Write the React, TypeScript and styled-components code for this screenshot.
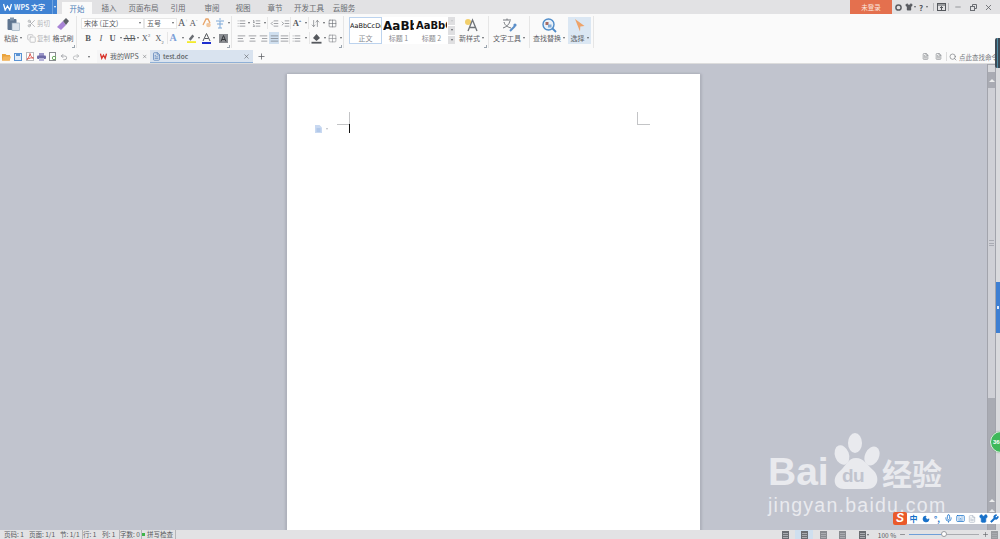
import React from 'react'
import styled, { createGlobalStyle } from 'styled-components'
import {
  AlignCenter,
  AlignJustify,
  AlignLeft,
  AlignRight,
  ArrowDownUp,
  Copy,
  FileText,
  Grid2x2,
  IndentDecrease,
  IndentIncrease,
  Keyboard,
  List,
  ListOrdered,
  Mic,
  Minus,
  Moon,
  Plus,
  Redo2,
  Scissors,
  Search,
  Shirt,
  Undo2,
  Wrench,
  X
} from 'lucide-react'

const GlobalStyle = createGlobalStyle`
  html, body {
    margin: 0;
    padding: 0;
    overflow: hidden;
    background: #c1c4ce;
  }
  * {
    box-sizing: border-box;
  }
`

const Window = styled.div`
  width: 1000px;
  height: 539px;
  position: relative;
  overflow: hidden;
  display: flex;
  flex-direction: column;
  font-family: 'Noto Sans CJK SC', 'Liberation Sans', sans-serif;
  color: #5b5e63;
`

const TitleBar = styled.div`
  height: 14px;
  background: #e2e2e4;
  display: flex;
  align-items: stretch;
  flex: none;
`

const AppButton = styled.div`
  width: 52px;
  background: #3f82d3;
  color: #eef5fc;
  font-size: 7px;
  font-weight: 700;
  display: flex;
  align-items: center;
  gap: 2px;
  padding-left: 3px;
`

const AppDrop = styled.div`
  width: 5px;
  margin-right: 5px;
  background: #3f82d3;
  border-left: 1px solid #6fa3e0;
  display: flex;
  align-items: center;
  justify-content: center;
`

const TitleTab = styled.div<{ $w: number; $on?: boolean }>`
  width: ${p => p.$w}px;
  font-size: 7.5px;
  display: flex;
  align-items: center;
  justify-content: center;
  color: ${p => (p.$on ? '#4f7fb8' : '#696b70')};
  background: ${p => (p.$on ? '#fafafa' : 'transparent')};
  margin-top: ${p => (p.$on ? '2px' : '0')};
`

const LoginButton = styled.div`
  margin-left: auto;
  width: 42px;
  background: #e4704e;
  color: #fbe6df;
  font-size: 6.5px;
  display: flex;
  align-items: center;
  justify-content: center;
`

const WindowTools = styled.div`
  width: 108px;
  display: flex;
  align-items: center;
  color: #55585d;
`

const WindowTool = styled.div<{ $w: number }>`
  width: ${p => p.$w}px;
  display: flex;
  align-items: center;
  justify-content: center;
  font-size: 8px;
  font-weight: 700;
`

const TitleSep = styled.div`
  width: 1px;
  height: 8px;
  background: #b9babd;
`

const Ribbon = styled.div`
  height: 36px;
  background: #fafafa;
  display: flex;
  flex: none;
`

const Group = styled.div<{ $w: number; $pad?: number }>`
  width: ${p => p.$w}px;
  height: 32px;
  margin-top: 2px;
  padding: 1px 0 0 ${p => p.$pad ?? 0}px;
  border-right: 1px solid #e6e6e6;
  position: relative;
  display: flex;
`

const Stack = styled.div`
  display: flex;
  flex-direction: column;
  gap: 3px;
`

const ToolRow = styled.div`
  display: flex;
  align-items: center;
  height: 12px;
`

const Tool = styled.div<{ $w: number; $on?: boolean; $sep?: boolean }>`
  width: ${p => p.$w}px;
  height: 12px;
  flex: none;
  display: flex;
  align-items: center;
  justify-content: center;
  color: #666a70;
  font-size: 8px;
  background: ${p => (p.$on ? '#cfdfef' : 'transparent')};
  border-right: ${p => (p.$sep ? '1px solid #e6e6e6' : '0')};
`

const Glyph = styled.span<{ $bold?: boolean; $italic?: boolean; $strike?: boolean; $c?: string; $size?: number }>`
  font-family: 'Liberation Serif', serif;
  font-size: ${p => p.$size ?? 8.5}px;
  line-height: 1;
  font-weight: ${p => (p.$bold ? 700 : 400)};
  font-style: ${p => (p.$italic ? 'italic' : 'normal')};
  text-decoration: ${p => (p.$strike ? 'line-through' : 'none')};
  color: ${p => p.$c ?? '#55585d'};
  sup, sub {
    font-size: 4.5px;
    line-height: 0;
  }
`

const Caret = styled.i<{ $c?: string }>`
  display: block;
  width: 0;
  height: 0;
  flex: none;
  border-left: 1.5px solid transparent;
  border-right: 1.5px solid transparent;
  border-top: 2px solid ${p => p.$c ?? '#5f6266'};
`

const Expander = styled.i`
  position: absolute;
  right: 1px;
  bottom: 0;
  width: 3px;
  height: 3px;
  border-right: 1px solid #9aa4ae;
  border-bottom: 1px solid #9aa4ae;
`

const Label = styled.span`
  font-size: 7px;
  line-height: 12px;
  color: #5d6065;
  white-space: nowrap;
`

const SmallLabel = styled(Label)`
  color: #b0b2b6;
  font-size: 6.5px;
`

const ClipLarge = styled.div<{ $w: number }>`
  width: ${p => p.$w}px;
  display: flex;
  flex-direction: column;
  align-items: center;
  gap: 1px;
`

const LargeIcon = styled.div`
  height: 14px;
  display: flex;
  align-items: center;
  justify-content: center;
`

const LabelRow = styled.div`
  height: 12px;
  display: flex;
  align-items: center;
  gap: 2px;
`

const Combo = styled.div<{ $w: number }>`
  width: ${p => p.$w}px;
  height: 11px;
  flex: none;
  background: #fff;
  border: 1px solid #e7e7e7;
  display: flex;
  align-items: center;
  justify-content: space-between;
  padding: 0 2px 0 2px;
  font-size: 7px;
  color: #55585d;
`

const Gallery = styled.div`
  width: 107px;
  height: 27px;
  margin-left: 5px;
  background: #fff;
  display: flex;
`

const StyleCard = styled.div<{ $w: number; $on?: boolean }>`
  width: ${p => p.$w}px;
  flex: none;
  overflow: hidden;
  display: flex;
  flex-direction: column;
  align-items: center;
  border: 1px solid ${p => (p.$on ? '#bcd3ee' : 'transparent')};
`

const StyleSample = styled.div<{ $size: number; $bold?: boolean }>`
  height: 16px;
  line-height: 16px;
  align-self: flex-start;
  font-family: 'DejaVu Sans', sans-serif;
  font-size: ${p => p.$size}px;
  font-weight: ${p => (p.$bold ? 700 : 400)};
  color: #111;
  white-space: nowrap;
`

const StyleName = styled.div`
  font-size: 7px;
  line-height: 8px;
  color: #8a8c90;
`

const GalleryScroll = styled.div`
  width: 7px;
  margin-left: auto;
  display: flex;
  flex-direction: column;
  gap: 1px;
`

const GalleryStep = styled.div`
  flex: 1;
  background: #dfdfe1;
  display: flex;
  align-items: center;
  justify-content: center;
`

const BigTool = styled.div<{ $w: number; $on?: boolean }>`
  width: ${p => p.$w}px;
  height: 27px;
  flex: none;
  padding-top: 1px;
  display: flex;
  flex-direction: column;
  align-items: center;
  background: ${p => (p.$on ? '#dbe7f3' : 'transparent')};
`

const TabRow = styled.div`
  height: 14px;
  background: #fafafa;
  border-bottom: 1px solid #dcdcdc;
  display: flex;
  align-items: center;
  flex: none;
`

const QuickTool = styled.div<{ $w: number }>`
  width: ${p => p.$w}px;
  flex: none;
  display: flex;
  align-items: center;
  justify-content: center;
`

const DocTab = styled.div<{ $w: number; $on?: boolean }>`
  width: ${p => p.$w}px;
  height: 13px;
  flex: none;
  display: flex;
  align-items: center;
  gap: ${p => (p.$on ? 2 : 3)}px;
  padding: 0 3px 0 ${p => (p.$on ? 2 : 3)}px;
  font-size: ${p => (p.$on ? 6.5 : 7)}px;
  white-space: nowrap;
  background: ${p => (p.$on ? '#d9e3ef' : '#f5f5f6')};
  border-bottom: 1px solid ${p => (p.$on ? '#8fb0d6' : 'transparent')};
  font-weight: ${p => (p.$on ? 500 : 400)};
  span {
    flex: 1;
  }
`

const CommandSearch = styled.div`
  margin-left: auto;
  display: flex;
  align-items: center;
  width: 80px;
  font-size: 6.5px;
  color: #75787d;
  white-space: nowrap;
  overflow: hidden;
  gap: 2px;
`

const CommandSep = styled.i`
  width: 1px;
  height: 9px;
  flex: none;
  background: #dcdcdc;
`

const Workspace = styled.div`
  flex: 1;
  min-height: 0;
  display: flex;
  background: #c1c4ce;
`

const PageArea = styled.div`
  width: 987px;
  padding-top: 10px;
  display: flex;
  justify-content: center;
  overflow: hidden;
`

const Page = styled.div`
  width: 413px;
  height: 520px;
  background: #fff;
  position: relative;
  box-shadow: -2px 0 2px #aeb1bb, 2px 0 2px #aeb1bb, 0 -1px 2px #b3b6c0;
`

const CropMark = styled.i<{ $left: number; $flip?: boolean }>`
  position: absolute;
  left: ${p => p.$left}px;
  top: 38px;
  width: 13px;
  height: 13px;
  border-bottom: 1px solid #c3c4c6;
  border-right: ${p => (p.$flip ? '0' : '1px solid #c3c4c6')};
  border-left: ${p => (p.$flip ? '1px solid #c3c4c6' : '0')};
`

const Caretline = styled.i`
  position: absolute;
  left: 62px;
  top: 50px;
  width: 1px;
  height: 9px;
  background: #111;
`

const ParaMark = styled.div`
  position: absolute;
  left: 28px;
  top: 51px;
  display: flex;
  align-items: center;
  gap: 4px;
`

const ScrollTrack = styled.div`
  width: 8px;
  background: #a9abb3;
  display: flex;
  flex-direction: column;
  align-items: center;
  border-left: 1px solid #a2a4ac;
`

const ScrollCorner = styled.div`
  width: 100%;
  height: 7px;
  margin-top: 1px;
  background: #d7d8dc;
`

const ScrollArrow = styled.i<{ $down?: boolean }>`
  display: block;
  width: 0;
  height: 0;
  border-left: 3px solid transparent;
  border-right: 3px solid transparent;
  border-bottom: ${p => (p.$down ? '0' : '3px solid #eceded')};
  border-top: ${p => (p.$down ? '3px solid #eceded' : '0')};
`

const ScrollThumb = styled.div`
  width: 100%;
  height: 310px;
  margin: 6px 0 101px;
  background: #cfd0d6;
  display: flex;
  align-items: center;
  justify-content: center;
`

const ThumbGrip = styled.div`
  width: 5px;
  height: 6px;
  border-top: 1px solid #a9abb3;
  border-bottom: 1px solid #a9abb3;
  position: relative;
  &::after {
    content: '';
    position: absolute;
    left: 0;
    right: 0;
    top: 1.5px;
    height: 1px;
    background: #a9abb3;
  }
`

const ScrollStack = styled.div`
  margin-top: 7px;
  display: flex;
  flex-direction: column;
  align-items: center;
  gap: 1px;
`

const SideStrip = styled.div`
  width: 5px;
  background: #d9dadd;
  border-left: 1px solid #a2a4ac;
  padding-top: 218px;
`

const SideTab = styled.div`
  width: 100%;
  height: 51px;
  background: #3e7fd2;
  display: flex;
  align-items: center;
  justify-content: center;
  &::after {
    content: '';
    width: 2px;
    height: 3px;
    background: #dfeafa;
  }
`

const StatusBar = styled.div`
  height: 9px;
  background: #e2e2e4;
  display: flex;
  align-items: center;
  flex: none;
  padding-left: 4px;
  font-size: 6.5px;
  color: #585b60;
  white-space: nowrap;
`

const StatusItem = styled.div<{ $w: number; $sep?: boolean }>`
  width: ${p => p.$w}px;
  flex: none;
  line-height: 9px;
  overflow: hidden;
  border-right: ${p => (p.$sep ? '1px solid #b5b6b9' : '0')};
  display: flex;
  align-items: center;
  gap: 2px;
`

const GreenDot = styled.i`
  width: 3px;
  height: 3px;
  background: #3fb549;
`

const StatusRight = styled.div`
  margin-left: auto;
  display: flex;
  align-items: center;
  height: 9px;
`

const ViewTool = styled.div<{ $on?: boolean; $w: number }>`
  width: ${p => p.$w}px;
  height: 9px;
  display: flex;
  align-items: center;
  justify-content: center;
  gap: 1px;
  background: ${p => (p.$on ? '#cfdfef' : 'transparent')};
`

const ViewIcon = styled.i<{ $c?: string }>`
  width: 7px;
  height: 8px;
  background: repeating-linear-gradient(to bottom, ${p => p.$c ?? '#6a6d72'} 0 1px, #a9abb0 1px 2px);
  border: 1px solid ${p => p.$c ?? '#6a6d72'};
`

const ZoomText = styled.div`
  width: 24px;
  text-align: center;
`

const Slider = styled.div`
  width: 70px;
  height: 1px;
  margin: 0 3px;
  position: relative;
  background: linear-gradient(to right, #6f9fd8 50%, #a9abb0 50%);
`

const SliderKnob = styled.i`
  position: absolute;
  left: 32px;
  top: -3px;
  width: 6px;
  height: 6px;
  border-radius: 50%;
  background: #fff;
  border: 1px solid #9a9ca0;
`

const Watermark = styled.div`
  position: absolute;
  left: 768px;
  top: 432px;
  width: 190px;
  color: #e9eaee;
`

const BrandRow = styled.div`
  display: flex;
  align-items: flex-end;
  height: 58px;
`

const Bai = styled.div`
  font-family: 'Liberation Sans', sans-serif;
  font-weight: 700;
  font-size: 39px;
  line-height: 36px;
  width: 64px;
`

const PawBox = styled.div`
  width: 50px;
  height: 58px;
  position: relative;
  flex: none;
`

const DuText = styled.span`
  position: absolute;
  left: 10px;
  top: 34px;
  font-family: 'Liberation Sans', sans-serif;
  font-size: 19px;
  line-height: 20px;
  font-weight: 700;
  letter-spacing: -0.5px;
  color: #c1c4ce;
`

const Jing = styled.div`
  font-size: 30px;
  line-height: 36px;
  font-weight: 700;
  white-space: nowrap;
`

const SiteName = styled.div`
  font-family: 'Liberation Sans', sans-serif;
  font-size: 19.5px;
  line-height: 24px;
  margin-top: 3px;
  letter-spacing: 1.25px;
  white-space: nowrap;
`

const Bubble = styled.div`
  position: absolute;
  left: 990px;
  top: 431px;
  width: 22px;
  height: 22px;
  border-radius: 50%;
  background: #3fb85a;
  border: 1px solid #dff2e3;
  box-shadow: 0 0 1px #7c8a80;
  color: #fff;
  font-size: 6px;
  font-weight: 700;
  font-family: 'Liberation Sans', sans-serif;
  line-height: 20px;
  padding-left: 2px;
`

const DarkWidget = styled.div`
  position: absolute;
  left: 995px;
  top: 38px;
  width: 5px;
  height: 30px;
  background: #3d4a56;
  border-radius: 2px 0 0 2px;
  display: flex;
  justify-content: center;
  &::after {
    content: '';
    width: 1px;
    background: #4f8fa8;
  }
`

const ImeBar = styled.div`
  position: absolute;
  left: 893px;
  top: 512px;
  width: 107px;
  height: 13px;
  display: flex;
  align-items: center;
`

const ImeLogo = styled.div`
  width: 14px;
  height: 13px;
  background: #ea5a2a;
  border-radius: 2px;
  color: #fff;
  font-family: 'Liberation Sans', sans-serif;
  font-size: 12px;
  font-weight: 700;
  font-style: italic;
  line-height: 13px;
  text-align: center;
  flex: none;
`

const ImeTray = styled.div`
  flex: 1;
  height: 11px;
  background: #fff;
  display: flex;
  align-items: center;
  color: #1770c9;
`

const ImeItem = styled.div<{ $w: number; $c?: string }>`
  width: ${p => p.$w}px;
  flex: none;
  font-size: 8px;
  line-height: 11px;
  font-weight: 700;
  display: flex;
  align-items: center;
  justify-content: center;
  color: ${p => p.$c ?? '#1770c9'};
`

const PasteIcon = () => (
  <svg width="13" height="14" viewBox="0 0 13 14">
    <rect x="0.5" y="2" width="9" height="11" rx="1" fill="#5f7590" />
    <rect x="3" y="0.5" width="4" height="3" fill="#8195ab" />
    <rect x="5" y="6" width="7.5" height="7.5" fill="#dbe3ec" stroke="#8da2b8" strokeWidth="0.6" />
  </svg>
)

const BrushIcon = () => (
  <svg width="14" height="14" viewBox="0 0 14 14">
    <path d="M1 10 L7 4 L10 8 L5 13 Z" fill="#a884d6" />
    <path d="M7 4 L10 1 L13 4 L10 8 Z" fill="#5d6068" />
  </svg>
)

const WpsMark = () => (
  <svg width="9" height="8" viewBox="0 0 9 8">
    <path d="M0.5 1 L2.2 7 L4.5 3 L6.8 7 L8.5 1" fill="none" stroke="#fff" strokeWidth="1.3" />
  </svg>
)

const RedW = () => (
  <svg width="9" height="8" viewBox="0 0 9 8">
    <path d="M0.5 1 L2.3 7 L4.5 3 L6.7 7 L8.5 1" fill="none" stroke="#d8342c" strokeWidth="1.8" />
  </svg>
)

const ClearIcon = () => (
  <svg width="10" height="10" viewBox="0 0 10 10">
    <path d="M1 7 L4 1 L6 1 L8 5" fill="none" stroke="#e8a468" strokeWidth="1.3" />
    <circle cx="6.5" cy="7" r="2.3" fill="#f1c79f" />
  </svg>
)

const PinyinIcon = () => (
  <svg width="10" height="11" viewBox="0 0 10 11">
    <path d="M1 3 H9 M5 3 V10 M2 6 H8 M3 10 H7" stroke="#7da8d8" strokeWidth="1" fill="none" />
    <circle cx="5" cy="1" r="0.8" fill="#7da8d8" />
  </svg>
)

const HighlightIcon = () => (
  <svg width="10" height="11" viewBox="0 0 10 11">
    <path d="M2 6 L6 1 L8 3 L4 8 Z" fill="#6a6d72" />
    <rect x="0" y="8.5" width="10" height="2" fill="#f3ea2c" />
  </svg>
)

const ShadingIcon = () => (
  <svg width="11" height="11" viewBox="0 0 11 11">
    <path d="M5.5 1 L9 5 L5.5 8 L2 5 Z" fill="#55585d" />
    <rect x="0.5" y="8.8" width="10" height="1.8" fill="#55585d" />
  </svg>
)

const SparkleStyle = () => (
  <svg width="15" height="14" viewBox="0 0 15 14">
    <circle cx="4" cy="4" r="3" fill="#f2cf6b" />
    <path d="M4 13 L8.5 2 L13 13 M6 9.5 H11" fill="none" stroke="#6f7378" strokeWidth="1.3" />
  </svg>
)

const TextToolIcon = () => (
  <svg width="15" height="14" viewBox="0 0 15 14">
    <path d="M1 2 H9 M5 0.5 V2 M2 4 C3 8 6 9 9 10 M8 3 C7 7 4 9 1 10" fill="none" stroke="#73777c" strokeWidth="1" />
    <path d="M8 13 L13 8" stroke="#5b8fc9" strokeWidth="2" />
    <circle cx="13" cy="7" r="1.6" fill="#5b8fc9" />
  </svg>
)

const FindIcon = () => (
  <svg width="15" height="15" viewBox="0 0 15 15">
    <circle cx="6.5" cy="6.5" r="5.5" fill="#e8f0f8" stroke="#4f8cc9" strokeWidth="1.4" />
    <path d="M10.5 10.5 L14 14" stroke="#4f8cc9" strokeWidth="1.8" />
    <rect x="3.5" y="4" width="3" height="3" fill="#a76b62" />
    <rect x="6" y="6.5" width="3.5" height="3" fill="#7fa9d6" />
  </svg>
)

const CursorIcon = () => (
  <svg width="11" height="14" viewBox="0 0 11 14">
    <path d="M1 1 L10.5 8 L6.3 8.5 L6 13.5 Z" fill="#eda36a" />
  </svg>
)

const FolderIcon = () => (
  <svg width="9" height="8" viewBox="0 0 9 8">
    <path d="M0 1 H3.5 L4.5 2 H8 V7.5 H0 Z" fill="#e9a23b" />
    <path d="M1.5 3.5 H9 L7.5 7.5 H0 Z" fill="#f3b45a" />
  </svg>
)

const SaveIcon = () => (
  <svg width="8" height="8" viewBox="0 0 8 8">
    <rect x="0.5" y="0.5" width="7" height="7" fill="#e3edf8" stroke="#5a93d4" />
    <rect x="2" y="0.5" width="4" height="2.5" fill="#5a93d4" />
  </svg>
)

const PdfIcon = () => (
  <svg width="8" height="9" viewBox="0 0 8 9">
    <rect x="0.5" y="0.5" width="7" height="8" fill="#fff" stroke="#b9bbbf" />
    <path d="M1 7.5 C3 5 4 3 4 1.5 C4.5 4 6 6 7.5 6 C5.5 5.5 3 6 1 7.5 Z" fill="none" stroke="#d94a3f" strokeWidth="0.9" />
  </svg>
)

const PrintIcon = () => (
  <svg width="9" height="8" viewBox="0 0 9 8">
    <rect x="2" y="0" width="5" height="3" fill="#9b96c9" />
    <rect x="0" y="2.5" width="9" height="3.5" rx="1" fill="#6e6aa6" />
    <rect x="2" y="5" width="5" height="3" fill="#b6b3d8" />
  </svg>
)

const PreviewIcon = () => (
  <svg width="8" height="9" viewBox="0 0 8 9">
    <rect x="0.5" y="0.5" width="6" height="8" fill="#fff" stroke="#8a8d92" />
    <circle cx="5" cy="6" r="1.7" fill="none" stroke="#6cab5f" />
  </svg>
)

const ParaIcon = () => (
  <svg width="7" height="8" viewBox="0 0 7 8">
    <path d="M0 0 H4.5 L7 2.5 V8 H0 Z" fill="#c9d9f1" />
    <path d="M1.5 4 H5.5 M1.5 6 H5.5" stroke="#8fb0e0" strokeWidth="0.8" />
  </svg>
)

const PawIcon = () => (
  <svg width="50" height="58" viewBox="0 0 50 58">
    <ellipse cx="10" cy="23" rx="7" ry="10" transform="rotate(-20 10 23)" fill="#e9eaee" />
    <ellipse cx="23" cy="11" rx="7" ry="10" fill="#e9eaee" />
    <ellipse cx="40" cy="24" rx="7" ry="10" transform="rotate(25 40 24)" fill="#e9eaee" />
    <path d="M24 26 C32 26 35 33 41 38 C48 44 47 57 35 57 H12 C1 57 0 45 8 39 C14 34 16 26 24 26 Z" fill="#e9eaee" />
  </svg>
)

const titleTabs = [
  { label: '开始', w: 30, on: true },
  { label: '插入', w: 34 },
  { label: '页面布局', w: 35 },
  { label: '引用', w: 34 },
  { label: '审阅', w: 34 },
  { label: '视图', w: 28 },
  { label: '章节', w: 36 },
  { label: '开发工具', w: 32 },
  { label: '云服务', w: 38 }
]

const ic = { size: 9, strokeWidth: 1.6 }

const App: React.FC = () => (
  <Window>
    <GlobalStyle />
    <TitleBar>
      <AppButton>
        <WpsMark />
        WPS 文字
      </AppButton>
      <AppDrop>
        <Caret $c="#fff" />
      </AppDrop>
      {titleTabs.map(t => (
        <TitleTab key={t.label} $w={t.w} $on={t.on}>
          {t.label}
        </TitleTab>
      ))}
      <LoginButton>未登录</LoginButton>
      <WindowTools>
        <WindowTool $w={12}>
          <svg width="7" height="7" viewBox="0 0 7 7">
            <circle cx="3.5" cy="3.5" r="2.6" fill="none" stroke="#5a5d62" strokeWidth="1.5" />
          </svg>
        </WindowTool>
        <WindowTool $w={9}>
          <Shirt size={8} fill="#5a5d62" strokeWidth={1} />
        </WindowTool>
        <WindowTool $w={4}>
          <Caret />
        </WindowTool>
        <WindowTool $w={8}>?</WindowTool>
        <WindowTool $w={4}>
          <Caret />
        </WindowTool>
        <WindowTool $w={4} />
        <TitleSep />
        <WindowTool $w={14}>
          <svg width="9" height="8" viewBox="0 0 9 8">
            <rect x="0.5" y="0.5" width="8" height="7" fill="none" stroke="#55585d" />
            <path d="M0.5 2 H8.5" stroke="#55585d" />
            <path d="M4.5 7 V3.5 M3 5 L4.5 3.5 L6 5" stroke="#55585d" fill="none" />
          </svg>
        </WindowTool>
        <TitleSep />
        <WindowTool $w={18}>
          <Minus size={8} strokeWidth={1.6} />
        </WindowTool>
        <WindowTool $w={12}>
          <svg width="7" height="7" viewBox="0 0 7 7">
            <rect x="0.5" y="2.5" width="4" height="4" fill="none" stroke="#6a6d72" />
            <path d="M2.5 2.5 V0.5 H6.5 V4.5 H4.5" fill="none" stroke="#6a6d72" />
          </svg>
        </WindowTool>
        <WindowTool $w={19}>
          <X size={9} strokeWidth={2} />
        </WindowTool>
      </WindowTools>
    </TitleBar>

    <Ribbon>
      <Group $w={77}>
        <ClipLarge $w={26}>
          <LargeIcon>
            <PasteIcon />
          </LargeIcon>
          <LabelRow>
            <Label>粘贴</Label>
            <Caret />
          </LabelRow>
        </ClipLarge>
        <Stack>
          <ToolRow>
            <Tool $w={11}>
              <Scissors size={9} color="#a2a4a8" />
            </Tool>
            <SmallLabel>剪切</SmallLabel>
          </ToolRow>
          <ToolRow>
            <Tool $w={11}>
              <Copy size={9} color="#b5b7ba" />
            </Tool>
            <SmallLabel>复制</SmallLabel>
          </ToolRow>
        </Stack>
        <ClipLarge $w={26}>
          <LargeIcon>
            <BrushIcon />
          </LargeIcon>
          <Label>格式刷</Label>
        </ClipLarge>
        <Expander />
      </Group>

      <Group $w={155} $pad={4}>
        <Stack>
          <ToolRow>
            <Combo $w={63}>
              宋体 (正文)
              <Caret />
            </Combo>
            <Combo $w={33}>
              五号
              <Caret />
            </Combo>
            <Tool $w={1} />
            <Tool $w={10}>
              <Glyph $size={10}>
                A<sup>+</sup>
              </Glyph>
            </Tool>
            <Tool $w={11}>
              <Glyph $size={9}>
                A<sup>-</sup>
              </Glyph>
            </Tool>
            <Tool $w={15}>
              <ClearIcon />
            </Tool>
            <Tool $w={12}>
              <PinyinIcon />
            </Tool>
            <Tool $w={5}>
              <Caret />
            </Tool>
          </ToolRow>
          <ToolRow>
            <Tool $w={14}>
              <Glyph $bold>B</Glyph>
            </Tool>
            <Tool $w={12}>
              <Glyph $italic>I</Glyph>
            </Tool>
            <Tool $w={11}>
              <Glyph $bold>U</Glyph>
            </Tool>
            <Tool $w={6}>
              <Caret />
            </Tool>
            <Tool $w={11}>
              <Glyph $strike>AB</Glyph>
            </Tool>
            <Tool $w={5}>
              <Caret />
            </Tool>
            <Tool $w={12}>
              <Glyph>
                X<sup>2</sup>
              </Glyph>
            </Tool>
            <Tool $w={16} $sep>
              <Glyph>
                X<sub>2</sub>
              </Glyph>
            </Tool>
            <Tool $w={10}>
              <Glyph $bold $c="#7d9fd8" $size={10}>
                A
              </Glyph>
            </Tool>
            <Tool $w={9}>
              <Caret />
            </Tool>
            <Tool $w={9}>
              <HighlightIcon />
            </Tool>
            <Tool $w={5}>
              <Caret />
            </Tool>
            <Tool $w={10}>
              <svg width="9" height="11" viewBox="0 0 9 11">
                <path d="M1 8 L4.5 0.5 L8 8 M2.5 5.5 H6.5" fill="none" stroke="#55585d" />
                <rect y="9" width="9" height="2" fill="#1e2fcf" />
              </svg>
            </Tool>
            <Tool $w={6}>
              <Caret />
            </Tool>
            <Tool $w={12}>
              <svg width="9" height="9" viewBox="0 0 9 9">
                <rect width="9" height="9" fill="#8a8d92" />
                <path d="M2 7.5 L4.5 1.5 L7 7.5 M3 5.5 H6" fill="none" stroke="#33363a" />
              </svg>
            </Tool>
          </ToolRow>
        </Stack>
        <Expander />
      </Group>

      <Group $w={112} $pad={4}>
        <Stack>
          <ToolRow>
            <Tool $w={10}>
              <List {...ic} />
            </Tool>
            <Tool $w={5}>
              <Caret />
            </Tool>
            <Tool $w={11}>
              <ListOrdered {...ic} />
            </Tool>
            <Tool $w={6} $sep>
              <Caret />
            </Tool>
            <Tool $w={12}>
              <IndentDecrease {...ic} />
            </Tool>
            <Tool $w={11} $sep>
              <IndentIncrease {...ic} />
            </Tool>
            <Tool $w={12}>
              <Glyph $bold>
                A<sup>+</sup>
              </Glyph>
            </Tool>
            <Tool $w={6} $sep>
              <Caret />
            </Tool>
            <Tool $w={12}>
              <ArrowDownUp {...ic} />
            </Tool>
            <Tool $w={5}>
              <Caret />
            </Tool>
            <Tool $w={12}>
              <Grid2x2 {...ic} />
            </Tool>
          </ToolRow>
          <ToolRow>
            <Tool $w={11}>
              <AlignLeft {...ic} />
            </Tool>
            <Tool $w={11}>
              <AlignCenter {...ic} />
            </Tool>
            <Tool $w={11}>
              <AlignRight {...ic} />
            </Tool>
            <Tool $w={10} $on>
              <AlignJustify {...ic} />
            </Tool>
            <Tool $w={11} $sep>
              <AlignJustify {...ic} />
            </Tool>
            <Tool $w={12}>
              <List {...ic} />
            </Tool>
            <Tool $w={8} $sep>
              <Caret />
            </Tool>
            <Tool $w={12}>
              <ShadingIcon />
            </Tool>
            <Tool $w={5}>
              <Caret />
            </Tool>
            <Tool $w={11}>
              <Grid2x2 {...ic} color="#85888d" />
            </Tool>
            <Tool $w={5}>
              <Caret />
            </Tool>
          </ToolRow>
        </Stack>
        <Expander />
      </Group>

      <Group $w={145}>
        <Gallery>
          <StyleCard $w={33} $on>
            <StyleSample $size={6.5}>AaBbCcDd</StyleSample>
            <StyleName>正文</StyleName>
          </StyleCard>
          <StyleCard $w={33}>
            <StyleSample $size={12} $bold>
              AaBbC
            </StyleSample>
            <StyleName>标题 1</StyleName>
          </StyleCard>
          <StyleCard $w={33}>
            <StyleSample $size={10} $bold>
              AaBbC
            </StyleSample>
            <StyleName>标题 2</StyleName>
          </StyleCard>
          <GalleryScroll>
            <GalleryStep>
              <Caret $c="#c4c5c8" />
            </GalleryStep>
            <GalleryStep>
              <Caret />
            </GalleryStep>
            <GalleryStep>
              <Caret />
            </GalleryStep>
          </GalleryScroll>
        </Gallery>
        <BigTool $w={33}>
          <LargeIcon>
            <SparkleStyle />
          </LargeIcon>
          <LabelRow>
            <Label>新样式</Label>
            <Caret />
          </LabelRow>
        </BigTool>
        <Expander />
      </Group>

      <Group $w={41}>
        <BigTool $w={40}>
          <LargeIcon>
            <TextToolIcon />
          </LargeIcon>
          <LabelRow>
            <Label>文字工具</Label>
            <Caret />
          </LabelRow>
        </BigTool>
      </Group>

      <Group $w={64}>
        <BigTool $w={38}>
          <LargeIcon>
            <FindIcon />
          </LargeIcon>
          <LabelRow>
            <Label>查找替换</Label>
            <Caret />
          </LabelRow>
        </BigTool>
        <BigTool $w={23} $on>
          <LargeIcon>
            <CursorIcon />
          </LargeIcon>
          <LabelRow>
            <Label>选择</Label>
            <Caret />
          </LabelRow>
        </BigTool>
      </Group>
    </Ribbon>

    <TabRow>
      <QuickTool $w={12}>
        <FolderIcon />
      </QuickTool>
      <QuickTool $w={12}>
        <SaveIcon />
      </QuickTool>
      <QuickTool $w={12}>
        <PdfIcon />
      </QuickTool>
      <QuickTool $w={11}>
        <PrintIcon />
      </QuickTool>
      <QuickTool $w={11}>
        <PreviewIcon />
      </QuickTool>
      <QuickTool $w={12}>
        <Undo2 size={8} color="#8a8d92" />
      </QuickTool>
      <QuickTool $w={11}>
        <Redo2 size={8} color="#a5a7ab" />
      </QuickTool>
      <QuickTool $w={16}>
        <Caret />
      </QuickTool>
      <DocTab $w={53}>
        <RedW />
        <span>我的WPS</span>
        <X size={7} />
      </DocTab>
      <DocTab $w={103} $on>
        <FileText size={9} color="#5a82b8" />
        <span>test.doc</span>
        <X size={7} />
      </DocTab>
      <QuickTool $w={16}>
        <Plus size={9} />
      </QuickTool>
      <CommandSearch>
        <QuickTool $w={10}>
          <FileText size={7} />
        </QuickTool>
        <QuickTool $w={12}>
          <FileText size={7} />
        </QuickTool>
        <CommandSep />
        <Search size={8} />
        点此查找命令
      </CommandSearch>
    </TabRow>

    <Workspace>
      <PageArea>
        <Page>
          <CropMark $left={50} />
          <CropMark $left={350} $flip />
          <ParaMark>
            <ParaIcon />
            <Caret $c="#b9bcc2" />
          </ParaMark>
          <Caretline />
        </Page>
      </PageArea>
      <ScrollTrack>
        <ScrollCorner />
        <ScrollStack>
          <ScrollArrow />
        </ScrollStack>
        <ScrollThumb>
          <ThumbGrip />
        </ScrollThumb>
        <ScrollArrow />
        <ScrollStack>
          <ScrollArrow />
          <ScrollArrow $down />
        </ScrollStack>
      </ScrollTrack>
      <SideStrip>
        <SideTab />
      </SideStrip>
    </Workspace>

    <StatusBar>
      <StatusItem $w={25}>页码: 1</StatusItem>
      <StatusItem $w={31}>页面: 1/1</StatusItem>
      <StatusItem $w={23} $sep>
        节: 1/1
      </StatusItem>
      <StatusItem $w={19}>行: 1</StatusItem>
      <StatusItem $w={18} $sep>
        列: 1
      </StatusItem>
      <StatusItem $w={22} $sep>
        字数: 0
      </StatusItem>
      <StatusItem $w={34} $sep>
        <GreenDot />
        拼写检查
      </StatusItem>
      <StatusRight>
        <ViewTool $w={20}>
          <ViewIcon />
        </ViewTool>
        <ViewTool $w={18} $on>
          <ViewIcon />
        </ViewTool>
        <ViewTool $w={20}>
          <ViewIcon $c="#888b90" />
        </ViewTool>
        <ViewTool $w={19}>
          <ViewIcon $c="#888b90" />
        </ViewTool>
        <ViewTool $w={23}>
          <ViewIcon />
          <Caret />
        </ViewTool>
        <ZoomText>100 %</ZoomText>
        <Minus size={7} />
        <Slider>
          <SliderKnob />
        </Slider>
        <Plus size={7} />
        <ViewTool $w={11}>
          <ViewIcon $c="#9a9ca0" />
        </ViewTool>
      </StatusRight>
    </StatusBar>

    <Watermark>
      <BrandRow>
        <Bai>Bai</Bai>
        <PawBox>
          <PawIcon />
          <DuText>du</DuText>
        </PawBox>
        <Jing>经验</Jing>
      </BrandRow>
      <SiteName>jingyan.baidu.com</SiteName>
    </Watermark>

    <Bubble>360</Bubble>
    <DarkWidget />

    <ImeBar>
      <ImeLogo>S</ImeLogo>
      <ImeTray>
        <ImeItem $w={13}>中</ImeItem>
        <ImeItem $w={12}>
          <Moon size={8} fill="#1770c9" />
        </ImeItem>
        <ImeItem $w={10}>°,</ImeItem>
        <ImeItem $w={12}>
          <Mic size={9} />
        </ImeItem>
        <ImeItem $w={12}>
          <Keyboard size={9} />
        </ImeItem>
        <ImeItem $w={12} $c="#a9b4c2">
          <FileText size={8} />
        </ImeItem>
        <ImeItem $w={11}>
          <Shirt size={9} fill="#1770c9" />
        </ImeItem>
        <ImeItem $w={11}>
          <Wrench size={9} fill="#1770c9" />
        </ImeItem>
      </ImeTray>
    </ImeBar>
  </Window>
)

export default App
